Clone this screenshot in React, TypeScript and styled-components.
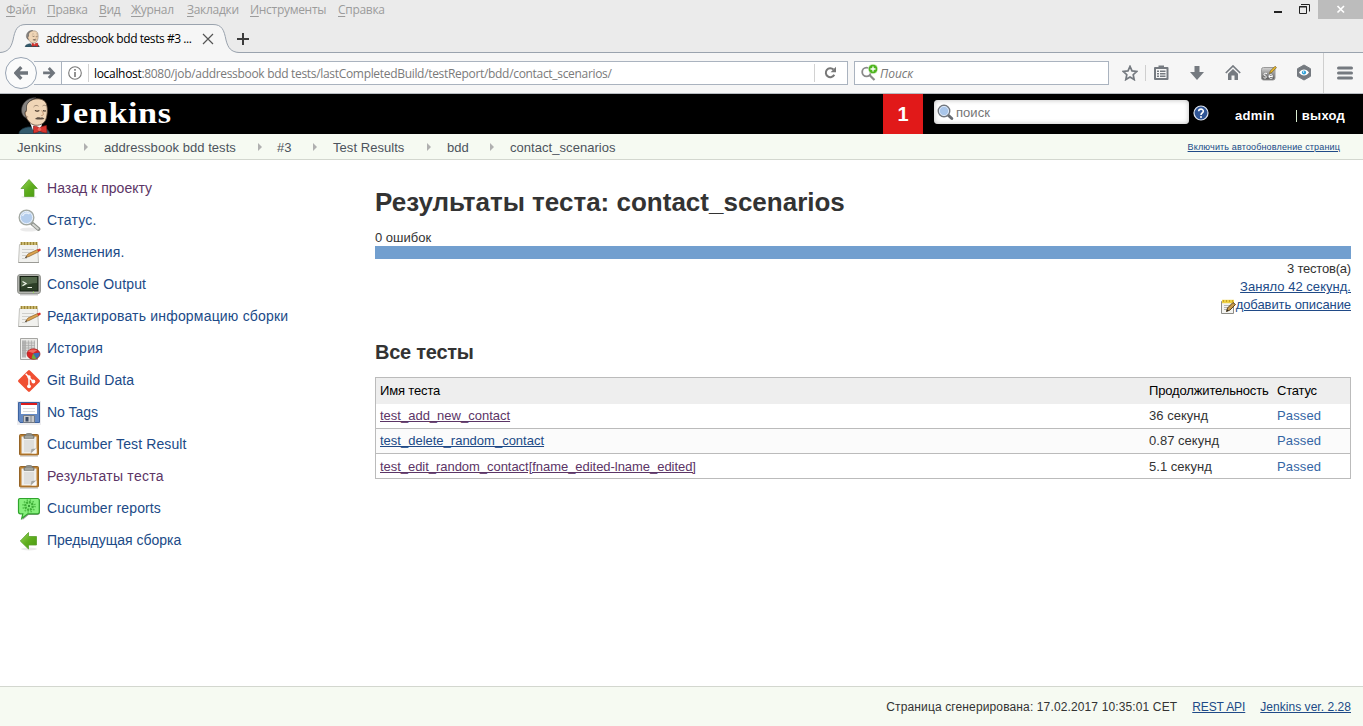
import React from "react";
import styled, { createGlobalStyle } from "styled-components";

const Global = createGlobalStyle`
  * { box-sizing: border-box; }
  body { margin: 0; background: #fff; overflow: hidden; }
  svg { display: block; flex: none; }
`;

const chromeFont = `"Open Sans", "Noto Sans", sans-serif`;
const pageFont = `"Liberation Sans", Arial, sans-serif`;

const Window = styled.div`
  width: 1363px;
  height: 726px;
  display: flex;
  flex-direction: column;
  overflow: hidden;
  background: #fff;
  color: #333;
  font: 13px/18px ${pageFont};
`;

/* ---------- browser frame ---------- */

const MenuBar = styled.div`
  height: 20px;
  flex: none;
  display: flex;
  justify-content: space-between;
  background: #ebebeb;
  padding-left: 6px;
  font: 12px/20px ${chromeFont};
  color: #9b9b9b;
`;
const MenuItems = styled.div`
  display: flex;
`;
const MenuItem = styled.span<{ $w: number }>`
  width: ${(p) => p.$w}px;
  letter-spacing: -0.3px;
  white-space: nowrap;
`;
const MenuKey = styled.u`
  text-underline-offset: 2px;
`;
const WindowButtons = styled.div`
  display: flex;
  height: 19px;
`;
const TabStrip = styled.div`
  height: 33px;
  flex: none;
  display: flex;
  background: #ebebeb;
  border-bottom: 1px solid #9aa3ae;
`;
const Tab = styled.div`
  position: relative;
  width: 232px;
  height: 33px;
  display: flex;
  align-items: center;
  padding: 4px 0 0 24px;
`;
const TabShape = styled.svg`
  position: absolute;
  left: 0;
  top: 0;
`;
const TabTitle = styled.span`
  position: relative;
  width: 161px;
  flex: none;
  padding: 1px 0 0 5px;
  font: 12px/16px ${chromeFont};
  letter-spacing: -0.44px;
  color: #000;
  white-space: nowrap;
`;
const Over = styled.span`
  position: relative;
`;
const NewTab = styled.div`
  padding: 13px 0 0 5px;
`;
const NavBar = styled.div`
  height: 41px;
  flex: none;
  display: flex;
  align-items: center;
  background: #f6f6f6;
  border-bottom: 1px solid #b8bcc2;
  padding: 0 0 1px 5px;
`;
const BackButton = styled.div`
  position: relative;
  z-index: 1;
  width: 32px;
  height: 32px;
  flex: none;
  border: 1px solid #98a4b3;
  border-radius: 50%;
  background: #fbfbfb;
  display: flex;
  align-items: center;
  justify-content: center;
`;
const ForwardButton = styled.div`
  width: 28px;
  height: 24px;
  margin-left: -3px;
  flex: none;
  border: 1px solid #aab3bf;
  border-left: 0;
  background: #fafafa;
  display: flex;
  align-items: center;
  padding-left: 8px;
`;
const UrlBar = styled.div`
  width: 786px;
  height: 24px;
  flex: none;
  border: 1px solid #aab3bf;
  border-left: 0;
  background: #fff;
  display: flex;
  align-items: center;
  padding-left: 6px;
`;
const UrlText = styled.span`
  flex: 1;
  margin-left: 6px;
  padding-left: 5px;
  border-left: 1px solid #d2d2d2;
  font: 12px/18px ${chromeFont};
  line-height: 20px;
  height: 18px;
  letter-spacing: -0.315px;
  color: #7a7a7a;
  white-space: nowrap;
`;
const UrlHost = styled.span`
  color: #000;
`;
const Reload = styled.div`
  width: 33px;
  height: 18px;
  border-left: 1px solid #d2d2d2;
  display: flex;
  align-items: center;
  padding-left: 9px;
`;
const BrowserSearch = styled.div`
  width: 255px;
  height: 24px;
  margin-left: 6px;
  flex: none;
  border: 1px solid #aab3bf;
  background: #fff;
  display: flex;
  align-items: center;
  padding-left: 5px;
  font: italic 12px/18px ${chromeFont};
  color: #777;
`;
const BrowserSearchHint = styled.span`
  padding-top: 2px;
`;
const Tools = styled.div`
  flex: 1;
  height: 40px;
  display: flex;
  align-items: center;
  color: #757a80;
`;
const Tool = styled.span<{ $ml: number }>`
  margin-left: ${(p) => p.$ml}px;
`;
const ToolDivider = styled.span<{ $ml: number; $h: number }>`
  width: 1px;
  height: ${(p) => p.$h}px;
  margin-left: ${(p) => p.$ml}px;
  background: #cfcfcf;
`;

/* ---------- page header ---------- */

const Header = styled.header`
  height: 40px;
  flex: none;
  display: flex;
  background: #000;
  color: #fff;
  padding-left: 18px;
`;
const Logo = styled.span`
  width: 865px;
  flex: none;
  display: flex;
`;
const LogoFigure = styled.span`
  height: 40px;
  padding-top: 3px;
  overflow: hidden;
`;
const LogoText = styled.span`
  padding: 2px 0 0 3px;
  font: bold 30px/33px "Liberation Serif", serif;
  letter-spacing: 0.5px;
  transform: scaleX(1.14);
  transform-origin: 0 0;
`;
const Badge = styled.span`
  width: 40px;
  background: #e11919;
  font: bold 20px/40px ${pageFont};
  text-align: center;
`;
const SearchBox = styled.div`
  width: 255px;
  height: 24px;
  margin: 6px 0 0 11px;
  border-radius: 4px;
  background: #fff;
  box-shadow: inset 0 0 5px #bbb;
  display: flex;
  align-items: center;
  padding-left: 3px;
  color: #757575;
  letter-spacing: 0.05px;
`;
const SearchHint = styled.span`
  padding: 2px 0 0 2px;
`;
const HelpIcon = styled.span`
  margin: 11px 0 0 4px;
`;
const HeaderLink = styled.b<{ $ml: number; $ls: number }>`
  margin: 13px 0 0 ${(p) => p.$ml}px;
  letter-spacing: ${(p) => p.$ls}px;
  white-space: nowrap;
`;
const HeaderBar = styled.span`
  width: 1px;
  height: 12px;
  margin: 16px 0 0 21px;
  background: #d8ecd0;
`;

const Breadcrumbs = styled.nav`
  height: 26px;
  flex: none;
  display: flex;
  background: #f6faf2;
  border-bottom: 1px solid #d3d7cf;
  padding-left: 17px;
  line-height: 27px;
  color: #4d545d;
`;
const Crumb = styled.span<{ $w: number }>`
  width: ${(p) => p.$w}px;
  letter-spacing: 0.05px;
  white-space: nowrap;
`;
const CrumbArrow = styled.span<{ $mr: number }>`
  width: 0;
  height: 0;
  margin: 9px ${(p) => p.$mr}px 0 0;
  border: 4px solid transparent;
  border-left: 4px solid #b0b0b0;
  border-right: 0;
`;
const RefreshLink = styled.a`
  margin-left: auto;
  padding-right: 23px;
  font-size: 9px;
  letter-spacing: 0.15px;
  color: #204a87;
  text-decoration: underline;
`;

/* ---------- body ---------- */

const Body = styled.div`
  flex: 1;
  display: flex;
`;
const Side = styled.aside`
  width: 375px;
  padding: 12px 0 0 17px;
`;
const Task = styled.div`
  height: 32px;
  display: flex;
  align-items: center;
`;
const TaskIcon = styled.span`
  padding-top: 2px;
`;
const TaskLink = styled.a<{ $ls: number; $visited?: boolean }>`
  margin-left: 6px;
  font-size: 14px;
  letter-spacing: ${(p) => p.$ls}px;
  color: ${(p) => (p.$visited ? "#5c3566" : "#204a87")};
  white-space: nowrap;
`;
const Main = styled.main`
  width: 976px;
  padding-top: 26px;
`;
const Title = styled.h1`
  margin: 0;
  font: bold 26px/32px ${pageFont};
`;
const Failures = styled.div`
  margin-top: 11px;
  height: 17px;
`;
const ResultBar = styled.div`
  height: 13px;
  background: #729fcf;
`;
const Summary = styled.div`
  display: flex;
  flex-direction: column;
  align-items: flex-end;
  padding-top: 1px;
`;
const Line = styled.div<{ $ls: number }>`
  display: flex;
  letter-spacing: ${(p) => p.$ls}px;
`;
const Link = styled.a<{ $visited?: boolean }>`
  color: ${(p) => (p.$visited ? "#5c3566" : "#204a87")};
  text-decoration: underline;
`;
const NoteIcon = styled.span`
  width: 15px;
  margin-top: 3px;
`;
const Subtitle = styled.h2`
  margin: 25px 0 12px;
  font: bold 20px/25px ${pageFont};
  letter-spacing: -0.25px;
`;
const Table = styled.div`
  border: 1px solid #bbb;
`;
const Row = styled.div<{ $h: number; $head?: boolean; $alt?: boolean; $last?: boolean }>`
  height: ${(p) => p.$h}px;
  display: grid;
  grid-template-columns: 769px 128px 1fr;
  align-items: center;
  padding: ${(p) => (p.$last ? 1 : 0)}px 0 0 4px;
  background: ${(p) => (p.$head ? "#eee" : p.$alt ? "#fbfbfb" : "#fff")};
  color: ${(p) => (p.$head ? "#000" : "#333")};
  border-bottom: ${(p) => (p.$head || p.$last ? "0" : "1px solid #bbb")};
`;
const Cell = styled.span<{ $ls: number; $passed?: boolean }>`
  letter-spacing: ${(p) => p.$ls}px;
  white-space: nowrap;
  color: ${(p) => (p.$passed ? "#3465a4" : "inherit")};
`;
const Footer = styled.footer`
  height: 40px;
  flex: none;
  display: flex;
  justify-content: flex-end;
  gap: 15px;
  padding-right: 12px;
  border-top: 1px solid #d3d7cf;
  background: #f6faf2;
  font-size: 12px;
  line-height: 40px;
`;
const FooterText = styled.span<{ $ls: number }>`
  letter-spacing: ${(p) => p.$ls}px;
`;

/* ---------- icons ---------- */

const Butler = ({ w, h }: { w: number; h: number }) => (
  <svg width={w} height={h} viewBox="0 0 34 37">
    <path d="M1 37c0-4 4-6 9-7h13c5 1 8 3 9 7z" fill="#335a6c" stroke="#1c3440" strokeWidth=".8" />
    <path d="M12 26l3 7 8-2 1-4z" fill="#fff" />
    <path d="M8 9C10 1.500 24-1 28 6c2 5 1.500 11 0 16-1.500 5-7 7-12 6-4-1-6.500-5-8-8z" fill="#f0d6b7" stroke="#5b4636" strokeWidth=".8" />
    <path d="M8 21C3.500 19 2.500 13 4.500 8.500 7 3 12 .6 18 .7c-5 2-8.500 4.500-9.500 8.300L8.500 13.500c-2 .5-2 4-.5 6z" fill="#85827f" stroke="#3b3735" strokeWidth=".6" />
    <path d="M9 14c-2.800.3-2 6 1.200 6" fill="#f0d6b7" stroke="#8a6a50" strokeWidth=".7" />
    <path d="M15.500 10c1.500-2 3.500-2 5-.8M24.500 9c1-1 2.500-1 3.500 0" fill="none" stroke="#8d7966" strokeWidth=".8" />
    <path d="M17 13.300c1.200 1 3 1 4.300.3M25 13.500c1 .7 2 .7 3 .2" fill="none" stroke="#3a2c20" strokeWidth="1.100" />
    <path d="M23.500 13.500c2.500 3 2.500 5-.2 5" fill="none" stroke="#b98a68" strokeWidth=".9" />
    <path d="M17 22c1.500-2 3.500-2 5.500-1.300 2-.5 3.300 0 3.800 1.300-3 .8-6.500.8-9.300 0z" fill="#5a4d42" />
    <path d="M15.500 29c3 0 4.500 1 6 2 2-2 5-2 7-2.500l.5 7.500c-3 0-5.500-1-7.500-2-2 1.500-4 2-6 2z" fill="#d8352f" stroke="#7e1713" strokeWidth=".6" />
    <circle cx="21.500" cy="32.300" r="1.700" fill="#f0645a" />
  </svg>
);

const Arrow = ({ flip }: { flip?: boolean }) => (
  <svg width="14" height="14" viewBox="0 0 14 14">
    <path
      d="M7.300 1.200L1.800 7 7.300 12.800M2.500 7H14"
      fill="none"
      stroke="#6f757c"
      strokeWidth="3.300"
      transform={flip ? "matrix(-.85 0 0 .85 13 1)" : undefined}
    />
  </svg>
);

const Magnifier = ({ s }: { s: number }) => (
  <svg width={s} height={s} viewBox="0 0 24 24">
    <ellipse cx="12" cy="20.500" rx="9" ry="2" fill="#000" opacity=".08" />
    <path d="M15 14.500l6.500 5.500" stroke="#8d918c" strokeWidth="3.800" strokeLinecap="round" />
    <path d="M16 15.500l5 4.200" stroke="#d5d7d2" strokeWidth="1.800" strokeLinecap="round" />
    <circle cx="9.500" cy="8.500" r="7.300" fill="#b4cdec" stroke="#a3a8a1" strokeWidth="1.400" />
    <circle cx="9.500" cy="8.500" r="6.100" fill="none" stroke="#edf3fb" strokeWidth="1" />
    <path d="M5.500 7c1-3 5-4 7-2" stroke="#fff" strokeWidth="1.500" fill="none" opacity=".7" />
  </svg>
);

const SearchGlass = () => (
  <svg width="17" height="17" viewBox="0 0 17 17">
    <path d="M11 11l3.800 3.500" stroke="#666a70" strokeWidth="3" strokeLinecap="round" />
    <circle cx="7" cy="7" r="5.700" fill="#a9c6ea" stroke="#71767d" strokeWidth="1.500" />
    <circle cx="7" cy="7" r="4.600" fill="none" stroke="#e8f0fa" strokeWidth=".8" />
  </svg>
);

const Notepad = () => (
  <svg width="24" height="24" viewBox="0 0 24 24">
    <path d="M2.500 3.500h18l1 18h-20z" fill="#f1f1ee" stroke="#c4c4c0" />
    <path d="M1.500 21.500h20.500" stroke="#9a9a95" />
    <path d="M5 8.500h12M5 11.500h11M5 14.500h6M5 17.500h5" stroke="#cfcfcb" />
    <path d="M3.500 1h17v3h-17z" fill="#cdbd74" />
    <path d="M4.500 1v3M7.500 1v3M10.500 1v3M13.500 1v3M16.500 1v3M19.500 1v3" stroke="#9b8438" strokeWidth="1.200" />
    <path d="M8.500 16.500l2.500-3.500L20.500 8.500l1.500 2-10 5z" fill="#dda550" stroke="#8a5f28" strokeWidth=".7" />
    <path d="M20 8.700l3-1.300 1 1.800-2.500 1.500z" fill="#d6322a" />
    <path d="M8 17l1.200-1.700 1 1z" fill="#333" />
  </svg>
);

const SmallNote = () => (
  <svg width="16" height="16" viewBox="0 0 16 16">
    <path d="M.5 2.500h12v12H.5z" fill="#f3f3f0" stroke="#8c8c88" />
    <path d="M3 6.500h7M3 8.500h5M3 10.500h4" stroke="#b5b5b2" />
    <path d="M1 .8h12v3.400H1z" fill="#edd043" />
    <path d="M2.500 1v2M5.500 1v2M8.500 1v2M11.500 1v2" stroke="#c9a424" />
    <path d="M5.500 12.500l1-3.500L12 3.500l2.500 2L9 11z" fill="#c79a4c" stroke="#4c3510" strokeWidth=".9" />
    <path d="M5.500 12.500l.7-2 1.500 1.300z" fill="#222" />
  </svg>
);

const GreenArrow = ({ left }: { left?: boolean }) => (
  <svg width="24" height="24" viewBox="0 0 24 24">
    <defs>
      <linearGradient id="leaf" x1="0" y1="0" x2="1" y2="1">
        <stop offset="0" stopColor="#9bd85a" />
        <stop offset=".5" stopColor="#5fae1e" />
        <stop offset="1" stopColor="#4a9a10" />
      </linearGradient>
    </defs>
    <ellipse cx="12" cy="20" rx="8" ry="1.500" fill="#000" opacity=".08" />
    <path
      d={left ? "M3.300 12L11.500 3.500v4h8v8.500h-8v4z" : "M12 2.500L20.300 11.500h-3.300v8h-9.500v-8H4z"}
      fill="url(#leaf)"
      stroke="#5aa02c"
      strokeWidth=".8"
    />
  </svg>
);

const Terminal = () => (
  <svg width="24" height="24" viewBox="0 0 24 24">
    <path d="M3 21.500h18" stroke="#ccc" strokeWidth="2" />
    <rect x=".6" y="1.600" width="22.800" height="19" rx="2.500" fill="#b4b6b0" stroke="#8d8f8a" />
    <rect x="3" y="3.500" width="18" height="14.500" fill="#2c3f27" stroke="#151f12" />
    <path d="M4 4h16v6c-6 0-10 2-16 4z" fill="#52674a" />
    <path d="M5.500 8.500l3.500 2-3.500 2.200M10.500 14.500h4.500" fill="none" stroke="#f0f5ea" strokeWidth="1.200" />
    <circle cx="16.500" cy="19.300" r=".7" fill="#9fe05a" />
  </svg>
);

const ReportChart = () => (
  <svg width="24" height="24" viewBox="0 0 24 24">
    <path d="M3.500 1.500h17v21h-17z" fill="#ededeb" stroke="#a5a5a2" />
    <path d="M5 3.500h13v13H5z" fill="#d8d8d6" />
    <path d="M5 3.500h3.500v17H5z" fill="#b4b4b4" />
    <path d="M5 6h13M5 8.500h13M5 11h13M5 13.500h13M5 16h8M8.500 3.500v17M11.500 3.500v12M14.500 3.500v9M17.500 3.500v9" stroke="#a9a9a7" strokeWidth=".7" />
    <ellipse cx="16.500" cy="17" rx="6.500" ry="5.200" fill="#d92323" stroke="#a11414" strokeWidth=".7" />
    <path d="M11 14.500c2-2.500 7-2.500 9-1l-4 2.500z" fill="#f16c62" />
    <path d="M16 16.500l6.500-1c.8 3-1 5-3.500 6z" fill="#3b6db5" />
    <path d="M16 16.500l3.500 5c-2 .8-4 .5-5 0z" fill="#72a83a" />
  </svg>
);

const GitIcon = () => (
  <svg width="24" height="24" viewBox="0 0 24 24">
    <rect x="3.900" y="3.900" width="16.200" height="16.200" rx="1.300" transform="rotate(45 12 12)" fill="#f05033" />
    <path d="M8.700 4.700l3.300 3.500v9.300M12 8.500l4.200 4" fill="none" stroke="#fff" strokeWidth="1.500" />
    <circle cx="12" cy="8" r="1.700" fill="#fff" />
    <circle cx="12" cy="17.300" r="1.900" fill="#fff" />
    <circle cx="16.400" cy="12.500" r="1.900" fill="#fff" />
  </svg>
);

const Floppy = () => (
  <svg width="24" height="24" viewBox="0 0 24 24">
    <path d="M0 0h24v24H0z" fill="#ececef" />
    <path d="M1.500 1.500h21v20H3l-1.500-2z" fill="#6389c4" stroke="#3c62a0" />
    <path d="M4 2h16v11H4z" fill="#fff" />
    <path d="M4 2h16v2H4z" fill="#dd1c1c" />
    <path d="M6 7.500h12M6 10.500h12" stroke="#dcdcdc" />
    <path d="M6.500 14.500h11v7h-11z" fill="#c6c7c9" stroke="#737a85" />
    <path d="M8.500 16h3v4.500h-3z" fill="#3a4b66" />
    <path d="M14 15v6" stroke="#a3a7ac" strokeWidth="2" />
  </svg>
);

const Clipboard = () => (
  <svg width="24" height="24" viewBox="0 0 24 24">
    <path d="M3 23.500h18" stroke="#d9d9d9" />
    <rect x="2.500" y="1.500" width="19" height="20.500" rx="1" fill="#bd7f2d" stroke="#966527" />
    <path d="M4.500 3.500h15v17h-15z" fill="#efefed" />
    <path d="M7 7h10v9l-3 3H7z" fill="#dededc" />
    <path d="M13.500 20.500l1-4.500 5-.5z" fill="#a6a6a2" />
    <path d="M14.500 20.500l5-5v5z" fill="#fafafa" />
    <path d="M8.500 2.500c0-3 7-3 7 0h1.500v2.800H7V2.500z" fill="#8b8d87" stroke="#73756f" strokeWidth=".8" />
    <path d="M8 4h8" stroke="#b9bbb5" />
  </svg>
);

const GreenBubble = () => (
  <svg width="24" height="24" viewBox="0 0 24 24">
    <path d="M4 2.500h19v12.500c0 2-1 3-3 3h-8.500l-6 5 1-5H5z" fill="#444" opacity=".55" />
    <path d="M3 1.500h17.500c1.200 0 1.800.7 1.800 2V15c0 1.300-.7 1.800-2 1.800h-9.500L4.700 21.500l1.100-4.700H3.500c-1.500 0-2-.7-2-2V3.500c0-1.300.2-2 1.500-2z" fill="#86ef7c" stroke="#2fa52c" strokeWidth="1.200" />
    <circle cx="12" cy="9" r="3.700" fill="none" stroke="#3fae38" strokeWidth="2.400" strokeDasharray="2 .8" />
    <circle cx="12" cy="9" r="6" fill="none" stroke="#4cba44" strokeWidth="1.500" strokeDasharray="1.300 1.840" />
    <circle cx="12" cy="9" r="1.200" fill="#3a9a36" />
  </svg>
);

const WindowControls = () => (
  <svg width="178" height="19" viewBox="0 0 178 19">
    <path d="M89 11h8v2h-8z" fill="#222" />
    <path d="M114.500 6.500h7v7h-7z" fill="none" stroke="#222" />
    <path d="M114 7h8M116 4.500h8.500v7" fill="none" stroke="#222" />
    <path d="M133 0h45v19h-45z" fill="#bcbcbc" />
    <path d="M152.500 6l6.500 6.500M159 6l-6.500 6.500" stroke="#fff" strokeWidth="1.700" />
  </svg>
);

/* ---------- data ---------- */

const menu: [string, number][] = [
  ["Файл", 41],
  ["Правка", 52],
  ["Вид", 32],
  ["Журнал", 56],
  ["Закладки", 63],
  ["Инструменты", 88],
  ["Справка", 60],
];

const crumbs: [string, number, number][] = [
  ["Jenkins", 67, 16],
  ["addressbook bdd tests", 154, 15],
  ["#3", 36, 16],
  ["Test Results", 94, 16],
  ["bdd", 43, 16],
  ["contact_scenarios", 120, 0],
];

const tasks: [React.ReactNode, string, number, boolean?][] = [
  [<GreenArrow />, "Назад к проекту", 0.02, true],
  [<Magnifier s={24} />, "Статус.", 0.2],
  [<Notepad />, "Изменения.", 0.1],
  [<Terminal />, "Console Output", 0.13],
  [<Notepad />, "Редактировать информацию сборки", 0.19],
  [<ReportChart />, "История", 0.25],
  [<GitIcon />, "Git Build Data", 0.05],
  [<Floppy />, "No Tags", 0],
  [<Clipboard />, "Cucumber Test Result", 0.1],
  [<Clipboard />, "Результаты теста", 0.25, true],
  [<GreenBubble />, "Cucumber reports", 0.12],
  [<GreenArrow left />, "Предыдущая сборка", 0],
];

const tests: [string, string, boolean, number][] = [
  ["test_add_new_contact", "36 секунд", true, 0],
  ["test_delete_random_contact", "0.87 секунд", false, 0],
  ["test_edit_random_contact[fname_edited-lname_edited]", "5.1 секунд", true, -0.04],
];

export default function App() {
  return (
    <Window>
      <Global />
      <MenuBar>
        <MenuItems>
          {menu.map(([t, w]) => (
            <MenuItem key={t} $w={w}>
              <MenuKey>{t[0]}</MenuKey>
              {t.slice(1)}
            </MenuItem>
          ))}
        </MenuItems>
        <WindowButtons>
          <WindowControls />
        </WindowButtons>
      </MenuBar>
      <TabStrip>
        <Tab>
          <TabShape width="240" height="33" viewBox="0 0 240 33">
            <path d="M0 32.500C8 32 11 28 13 20 15 10 17 4.500 26 4.500H213C222 4.500 224 10 226 20 228 28 231 32 239 32.500V33H0z" fill="#f6f6f6" />
            <path d="M0 32.500C8 32 11 28 13 20 15 10 17 4.500 26 4.500H213C222 4.500 224 10 226 20 228 28 231 32 239 32.500" fill="none" stroke="#9aa3ae" />
          </TabShape>
          <Over>
            <Butler w={17} h={17} />
          </Over>
          <TabTitle>addressbook bdd tests #3 ...</TabTitle>
          <Over>
            <svg width="12" height="12" viewBox="0 0 12 12">
              <path d="M1 1l10 10M11 1L1 11" stroke="#555" strokeWidth="1.200" />
            </svg>
          </Over>
        </Tab>
        <NewTab>
          <svg width="12" height="12" viewBox="0 0 12 12">
            <path d="M6 0v12M0 6h12" stroke="#3c3c3c" strokeWidth="2" />
          </svg>
        </NewTab>
      </TabStrip>
      <NavBar>
        <BackButton>
          <Arrow />
        </BackButton>
        <ForwardButton>
          <Arrow flip />
        </ForwardButton>
        <UrlBar>
          <svg width="14" height="14" viewBox="0 0 14 14">
            <circle cx="7" cy="7" r="6.300" fill="none" stroke="#777" strokeWidth="1.100" />
            <path d="M7 3v1.700M7 6v5" stroke="#777" strokeWidth="1.600" />
          </svg>
          <UrlText>
            <UrlHost>localhost</UrlHost>
            :8080/job/addressbook bdd tests/lastCompletedBuild/testReport/bdd/contact_scenarios/
          </UrlText>
          <Reload>
            <svg width="13" height="13" viewBox="0 0 13 13">
              <path d="M10.300 8.800A4.500 4.500 0 1 1 9.500 3.500" fill="none" stroke="#777" strokeWidth="2" />
              <path d="M12 .8v5.400H6.600z" fill="#777" />
            </svg>
          </Reload>
        </UrlBar>
        <BrowserSearch>
          <svg width="20" height="18" viewBox="0 0 20 18">
            <circle cx="6.500" cy="8" r="4.300" fill="none" stroke="#8a8a8a" strokeWidth="1.800" />
            <path d="M9.500 11l5 5" stroke="#8a8a8a" strokeWidth="2.200" />
            <circle cx="13" cy="5" r="4.800" fill="#4fb520" stroke="#fff" strokeWidth=".6" />
            <path d="M13 2.500v5M10.500 5h5" stroke="#fff" strokeWidth="1.300" />
          </svg>
          <BrowserSearchHint>Поиск</BrowserSearchHint>
        </BrowserSearch>
        <Tools>
          <Tool $ml={13}>
            <svg width="16" height="16" viewBox="0 0 16 16">
              <path d="M8 1.400l2 4.500 4.800.5-3.600 3.300 1 4.900L8 12.100l-4.200 2.500 1-4.900L1.200 6.400 6 5.900z" fill="none" stroke="currentColor" strokeWidth="1.700" />
            </svg>
          </Tool>
          <ToolDivider $ml={7} $h={16} />
          <Tool $ml={8}>
            <svg width="15" height="15" viewBox="0 0 15 15">
              <path d="M1 3h12.500v11H1z" fill="#f6f6f6" stroke="currentColor" strokeWidth="2" strokeLinejoin="round" />
              <path d="M4.500 3V.6h5.500V3zM3 5.500h2v1.500H3zM6 5.500h5.500v1.500H6zM3 8h2v1.500H3zM6 8h5.500v1.500H6zM3 10.500h2V12H3zM6 10.500h5.500V12H6z" fill="currentColor" />
            </svg>
          </Tool>
          <Tool $ml={21}>
            <svg width="14" height="14" viewBox="0 0 14 14">
              <path d="M4.500 0h5v6H14l-7 8-7-8h4.500z" fill="currentColor" />
            </svg>
          </Tool>
          <Tool $ml={21}>
            <svg width="16" height="15" viewBox="0 0 16 15">
              <path d="M.8 8L8 1l7.200 7" fill="none" stroke="currentColor" strokeWidth="1.700" />
              <path d="M3 8.800l5-4.800 5 4.800V15H9.500v-4.500h-3V15H3z" fill="currentColor" />
            </svg>
          </Tool>
          <Tool $ml={20}>
            <svg width="16" height="16" viewBox="0 0 16 16">
              <defs>
                <linearGradient id="se" x1="0" y1="0" x2="0" y2="1">
                  <stop offset="0" stopColor="#d4d4d4" />
                  <stop offset="1" stopColor="#555" />
                </linearGradient>
              </defs>
              <rect x=".5" y="2.500" width="13.500" height="12.500" rx="2" fill="url(#se)" stroke="#9a9a9a" />
              <path d="M6 8.500c-3-1-4 1.500-2 2.200 2.500.8 1.500 3.300-1.500 2M8 11.500h3.500c0-2.500-3.500-2.500-3.500 0 0 2 2 2.300 3.500 1.500" fill="none" stroke="#fff" />
              <path d="M8.500 8.500l.8-2.500 4.700-4.700 1.500 1.300L10.800 7.500z" fill="#e9b92c" stroke="#5d4a1a" strokeWidth=".6" />
            </svg>
          </Tool>
          <Tool $ml={19}>
            <svg width="16" height="17" viewBox="0 0 16 17">
              <path d="M8 1l6.500 3.700v7.600L8 16l-6.500-3.700V4.700z" fill="currentColor" stroke="currentColor" strokeLinejoin="round" />
              <path d="M3 8.500c2.500-4 7.500-4 10 0-2.500 4-7.500 4-10 0z" fill="#fff" />
              <circle cx="8" cy="8.500" r="2.100" fill="#2a9fd8" />
              <circle cx="7.600" cy="8" r=".7" fill="#fff" />
            </svg>
          </Tool>
          <ToolDivider $ml={11} $h={40} />
          <Tool $ml={13}>
            <svg width="16" height="14" viewBox="0 0 16 14">
              <path d="M1.500 2h13M1.500 7h13M1.500 12h13" stroke="currentColor" strokeWidth="3" strokeLinecap="round" />
            </svg>
          </Tool>
        </Tools>
      </NavBar>

      <Header>
        <Logo>
          <LogoFigure>
            <Butler w={34} h={37} />
          </LogoFigure>
          <LogoText>Jenkins</LogoText>
        </Logo>
        <Badge>1</Badge>
        <SearchBox>
          <SearchGlass />
          <SearchHint>поиск</SearchHint>
        </SearchBox>
        <HelpIcon>
          <svg width="16" height="16" viewBox="0 0 16 16">
            <circle cx="8" cy="8" r="7" fill="#2f5596" stroke="#dfe6f2" strokeWidth="1.200" />
            <path d="M5.700 6.300c.2-3 4.800-2.700 4.600 0C10.100 7.800 8 8 8 10" fill="none" stroke="#fff" strokeWidth="1.600" />
            <circle cx="8" cy="12" r="1" fill="#fff" />
          </svg>
        </HelpIcon>
        <HeaderLink $ml={26} $ls={0.3}>admin</HeaderLink>
        <HeaderBar />
        <HeaderLink $ml={5} $ls={0.25}>выход</HeaderLink>
      </Header>
      <Breadcrumbs>
        {crumbs.map(([t, w, mr], i) => (
          <React.Fragment key={t}>
            <Crumb $w={w}>{t}</Crumb>
            {i < crumbs.length - 1 && <CrumbArrow $mr={mr} />}
          </React.Fragment>
        ))}
        <RefreshLink>Включить автообновление страниц</RefreshLink>
      </Breadcrumbs>

      <Body>
        <Side>
          {tasks.map(([icon, label, ls, visited]) => (
            <Task key={label}>
              <TaskIcon>{icon}</TaskIcon>
              <TaskLink $ls={ls} $visited={visited}>{label}</TaskLink>
            </Task>
          ))}
        </Side>
        <Main>
          <Title>Результаты теста: contact_scenarios</Title>
          <Failures>0 ошибок</Failures>
          <ResultBar />
          <Summary>
            <Line $ls={-0.2}>3 тестов(а)</Line>
            <Line $ls={0.03}>
              <Link>Заняло 42 секунд.</Link>
            </Line>
            <Line $ls={-0.08}>
              <NoteIcon>
                <SmallNote />
              </NoteIcon>
              <Link>добавить описание</Link>
            </Line>
          </Summary>
          <Subtitle>Все тесты</Subtitle>
          <Table>
            <Row $h={26} $head>
              <Cell $ls={-0.15}>Имя теста</Cell>
              <Cell $ls={-0.15}>Продолжительность</Cell>
              <Cell $ls={-0.2}>Статус</Cell>
            </Row>
            {tests.map(([name, time, visited, ls], i) => (
              <Row key={name} $h={i === 2 ? 24 : 25} $alt={i === 1} $last={i === 2}>
                <Cell $ls={ls}>
                  <Link $visited={visited}>{name}</Link>
                </Cell>
                <Cell $ls={0.03}>{time}</Cell>
                <Cell $ls={0.12} $passed>Passed</Cell>
              </Row>
            ))}
          </Table>
        </Main>
      </Body>
      <Footer>
        <FooterText $ls={0.13}>Страница сгенерирована: 17.02.2017 10:35:01 CET</FooterText>
        <FooterText $ls={-0.1}>
          <Link>REST API</Link>
        </FooterText>
        <FooterText $ls={0.04}>
          <Link>Jenkins ver. 2.28</Link>
        </FooterText>
      </Footer>
    </Window>
  );
}
